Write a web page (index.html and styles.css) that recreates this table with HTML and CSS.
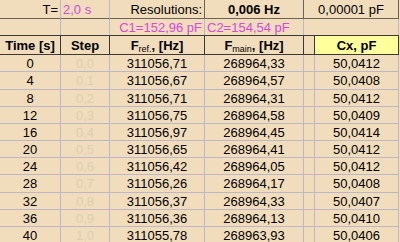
FILE: index.html
```html
<!DOCTYPE html>
<html>
<head>
<meta charset="utf-8">
<link rel="stylesheet" href="styles.css">
</head>
<body>
<table class="sheet">
  <colgroup>
    <col class="c-time"><col class="c-step"><col class="c-fref"><col class="c-fmain"><col class="c-gap"><col class="c-cx">
  </colgroup>
  <tr class="r-top">
    <td class="right">T=</td>
    <td class="left pink">2,0 s</td>
    <td class="right">Resolutions:</td>
    <td class="bold">0,006 Hz</td>
    <td colspan="2">0,00001 pF</td>
  </tr>
  <tr class="r-cap">
    <td></td>
    <td></td>
    <td class="right pink over">C1=152,96 pF</td>
    <td class="left pink over">C2=154,54 pF</td>
    <td colspan="2"></td>
  </tr>
  <tr class="r-head">
    <th>Time [s]</th>
    <th>Step</th>
    <th>F<sub>ref.</sub>, [Hz]</th>
    <th>F<sub>main</sub>, [Hz]</th>
    <th></th>
    <th class="cx">Cx, pF</th>
  </tr>
  <tr><td>0</td><td class="faint">0,0</td><td>311056,71</td><td>268964,33</td><td></td><td>50,0412</td></tr>
  <tr class="tall"><td>4</td><td class="faint">0,1</td><td>311056,67</td><td>268964,57</td><td></td><td>50,0408</td></tr>
  <tr><td>8</td><td class="faint">0,2</td><td>311056,71</td><td>268964,31</td><td></td><td>50,0412</td></tr>
  <tr><td>12</td><td class="faint">0,3</td><td>311056,75</td><td>268964,58</td><td></td><td>50,0409</td></tr>
  <tr><td>16</td><td class="faint">0,4</td><td>311056,97</td><td>268964,45</td><td></td><td>50,0414</td></tr>
  <tr><td>20</td><td class="faint">0,5</td><td>311056,65</td><td>268964,41</td><td></td><td>50,0412</td></tr>
  <tr><td>24</td><td class="faint">0,6</td><td>311056,42</td><td>268964,05</td><td></td><td>50,0412</td></tr>
  <tr class="tall"><td>28</td><td class="faint">0,7</td><td>311056,26</td><td>268964,17</td><td></td><td>50,0408</td></tr>
  <tr><td>32</td><td class="faint">0,8</td><td>311056,37</td><td>268964,33</td><td></td><td>50,0407</td></tr>
  <tr><td>36</td><td class="faint">0,9</td><td>311056,36</td><td>268964,13</td><td></td><td>50,0410</td></tr>
  <tr><td>40</td><td class="faint">1,0</td><td>311055,78</td><td>268963,93</td><td></td><td>50,0406</td></tr>
</table>
</body>
</html>
```
FILE: styles.css
```css
html, body {
  margin: 0;
  padding: 0;
  background: #f1ddbb;
  overflow: hidden;
}
body {
  width: 400px;
  height: 242px;
  font-family: "Liberation Sans", Arial, sans-serif;
  font-size: 13px;
  color: #000;
}
.sheet {
  table-layout: fixed;
  border-collapse: separate;
  border-spacing: 0;
  width: 399px;
}
.c-time { width: 61px; }
.c-step { width: 49px; }
.c-fref { width: 95px; }
.c-fmain { width: 99px; }
.c-gap { width: 11px; }
.c-cx { width: 84px; }

.sheet td, .sheet th {
  box-sizing: border-box;
  padding: 0 2px;
  border-right: 1px solid #bdb7c8;
  border-bottom: 1px solid #bdb7c8;
  text-align: center;
  white-space: nowrap;
  overflow: hidden;
  line-height: 15px;
  height: 17px;
  vertical-align: middle;
}
.sheet tr.tall td { height: 18px; }

.r-top td { height: 19px; border-bottom-color: #6b6358; }
.r-cap td { height: 16px; border-bottom: none; }
.r-top td:nth-child(3), .r-top td:nth-child(4), .r-top td:nth-child(5) { border-right-color: #6b6358; }

.r-head th {
  height: 20px;
  font-weight: bold;
  border-top: 1px solid #3d3832;
  border-bottom: 1px solid #3d3832;
  border-right: 1px solid #3d3832;
}
.r-head th sub {
  font-size: 9px;
  font-weight: normal;
  vertical-align: -2px;
  line-height: 0;
}
.r-head th.cx { background: #ffff9c; }

.right { text-align: right !important; }
.left { text-align: left !important; }
.bold { font-weight: bold; }
.pink { color: #dc46dc; }
.faint { color: #dccdb6; }
.over { overflow: visible; }
```
